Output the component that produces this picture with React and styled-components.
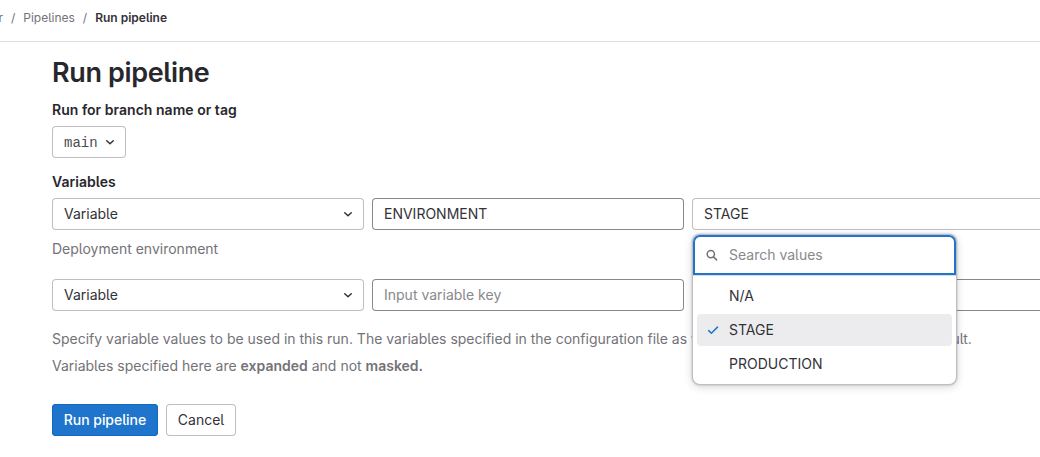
import React from 'react';
import styled, { createGlobalStyle, css } from 'styled-components';

const GlobalStyle = createGlobalStyle`
  *, *::before, *::after { box-sizing: border-box; }
  body {
    margin: 0;
    background: #fff;
    color: #333238;
    font-family: Inter, "Noto Sans", sans-serif;
    font-size: 14px;
    line-height: 20px;
    font-feature-settings: "cv05";
    overflow: hidden;
  }
`;

const Page = styled.div`
  height: 457px;
  overflow: hidden;
`;

const TopBar = styled.nav`
  display: flex;
  align-items: center;
  height: 42px;
  padding-bottom: 5px;
  border-bottom: 1px solid #dcdcde;
  font-size: 12px;
  line-height: 16px;
  color: #737278;
`;

const Crumb = styled.span`
  white-space: nowrap;
  ${p => p.$clipped && css`
    width: 3px;
    display: flex;
    justify-content: flex-end;
  `}
  ${p => p.$current && css`
    font-weight: 600;
    color: #333238;
  `}
`;

const Slash = styled.span`
  width: 20.3px;
  text-align: center;
`;

const Main = styled.main`
  padding: 16px 0 0 52px;
`;

const Title = styled.h1`
  margin: 0;
  font-size: 27px;
  line-height: 30px;
  font-weight: 600;
  letter-spacing: -0.36px;
  color: #28272d;
`;

const Label = styled.div`
  margin-top: ${p => p.$top}px;
  margin-bottom: 6px;
  font-weight: 600;
  letter-spacing: 0.03px;
  color: #28272d;
`;

const Button = styled.button`
  display: inline-flex;
  align-items: center;
  justify-content: center;
  width: ${p => p.$width}px;
  height: 32px;
  padding: 0;
  border: 0;
  border-radius: 4px;
  background: #fff;
  box-shadow: inset 0 0 0 1px #bfbfc3;
  color: #333238;
  font: inherit;
  font-feature-settings: inherit;
  white-space: nowrap;
  ${p => p.$primary && css`
    background: #1f75cb;
    box-shadow: inset 0 0 0 1px #1068bf;
    color: #fff;
    font-weight: 500;
    letter-spacing: -0.05px;
  `}
`;

const RefButton = styled(Button)`
  padding: 0 8px 0 12px;
  justify-content: space-between;
`;

const RefName = styled.span`
  padding-top: 2px;
  color: #4c4b51;
  font-family: "Liberation Mono", monospace;
`;

const Row = styled.div`
  position: relative;
  display: grid;
  grid-template-columns: 312px 312px 400px;
  column-gap: 8px;
`;

const Field = styled.div`
  display: flex;
  align-items: center;
  justify-content: space-between;
  height: 32px;
  padding: 0 8px 0 12px;
  border-radius: 4px;
  background: #fff;
  box-shadow: inset 0 0 0 1px ${p => (p.$input ? '#89888d' : '#bfbfc3')};
  color: ${p => (p.$placeholder ? '#89888d' : '#333238')};
`;

const Description = styled.div`
  margin: 9px 0 20px;
  color: #737278;
`;

const Help = styled.p`
  margin: ${p => p.$top}px 0 0;
  color: #737278;
  white-space: nowrap;

  b {
    font-weight: 600;
  }
`;

const Actions = styled.div`
  display: flex;
  gap: 8px;
  margin-top: 28px;
`;

const Menu = styled.div`
  position: absolute;
  top: 36px;
  left: 640px;
  width: 265px;
  height: 151px;
  z-index: 2;
  border: 1px solid #bfbfc3;
  border-radius: 8px;
  background: #fff;
  box-shadow: 0 0 2px rgba(5, 5, 6, 0.16), 0 0 2px rgba(5, 5, 6, 0.16), 0 2px 8px rgba(5, 5, 6, 0.16);
`;

const Search = styled.div`
  display: flex;
  align-items: center;
  gap: 11px;
  height: 40px;
  padding-left: 13px;
  border-radius: 7px 7px 0 0;
  box-shadow: inset 0 0 0 2px #1f75cb;
  color: #89888d;
`;

const Options = styled.div`
  display: flex;
  flex-direction: column;
  gap: 2px;
  padding: 4px;
  border-top: 1px solid #dcdcde;
`;

const Option = styled.div`
  display: grid;
  grid-template-columns: 24px 1fr;
  align-items: center;
  height: 32px;
  padding-left: 8px;
  border-radius: 4px;
  background: ${p => (p.$selected ? '#ececef' : 'transparent')};
  color: #333238;
`;

const Mark = styled.span`
  display: flex;
`;

const Chevron = () => (
  <svg width="16" height="16" viewBox="0 0 16 16" fill="none" stroke="#333238" strokeWidth="1.5" strokeLinecap="round" strokeLinejoin="round">
    <path d="M4.75 6.75 8 9.75l3.25-3" />
  </svg>
);

const SearchIcon = () => (
  <svg width="12" height="12" viewBox="0 0 12 12" fill="none" stroke="#737278" strokeWidth="1.5" strokeLinecap="round">
    <circle cx="4.8" cy="5.1" r="3.6" />
    <path d="m7.6 7.9 3 3" />
  </svg>
);

const Check = () => (
  <svg width="16" height="16" viewBox="0 0 16 16" fill="none" stroke="#1f75cb" strokeWidth="1.5" strokeLinecap="round" strokeLinejoin="round">
    <path d="m3.7 8.6 2.7 2.6 6.1-6.1" />
  </svg>
);

const options = ['N/A', 'STAGE', 'PRODUCTION'];

export default function App() {
  return (
    <Page>
      <GlobalStyle />
      <TopBar>
        <Crumb $clipped>r</Crumb>
        <Slash>/</Slash>
        <Crumb>Pipelines</Crumb>
        <Slash>/</Slash>
        <Crumb $current>Run pipeline</Crumb>
      </TopBar>
      <Main>
        <Title>Run pipeline</Title>
        <Label $top={12}>Run for branch name or tag</Label>
        <RefButton $width={74}><RefName>main</RefName><Chevron /></RefButton>
        <Label $top={14}>Variables</Label>
        <Row>
          <Field>Variable<Chevron /></Field>
          <Field $input>ENVIRONMENT</Field>
          <Field>STAGE</Field>
          <Menu>
            <Search><SearchIcon />Search values</Search>
            <Options>
              {options.map(name => (
                <Option key={name} $selected={name === 'STAGE'}>
                  <Mark>{name === 'STAGE' && <Check />}</Mark>
                  {name}
                </Option>
              ))}
            </Options>
          </Menu>
        </Row>
        <Description>Deployment environment</Description>
        <Row as="section">
          <Field>Variable<Chevron /></Field>
          <Field $input $placeholder>Input variable key</Field>
          <Field $input />
        </Row>
        <Help $top={18}>
          Specify variable values to be used in this run. The variables specified in the configuration file as well as CI/CD settings are used by default.
        </Help>
        <Help $top={7}>
          Variables specified here are <b>expanded</b> and not <b>masked.</b>
        </Help>
        <Actions>
          <Button $primary $width={106}>Run pipeline</Button>
          <Button $width={70}>Cancel</Button>
        </Actions>
      </Main>
    </Page>
  );
}
